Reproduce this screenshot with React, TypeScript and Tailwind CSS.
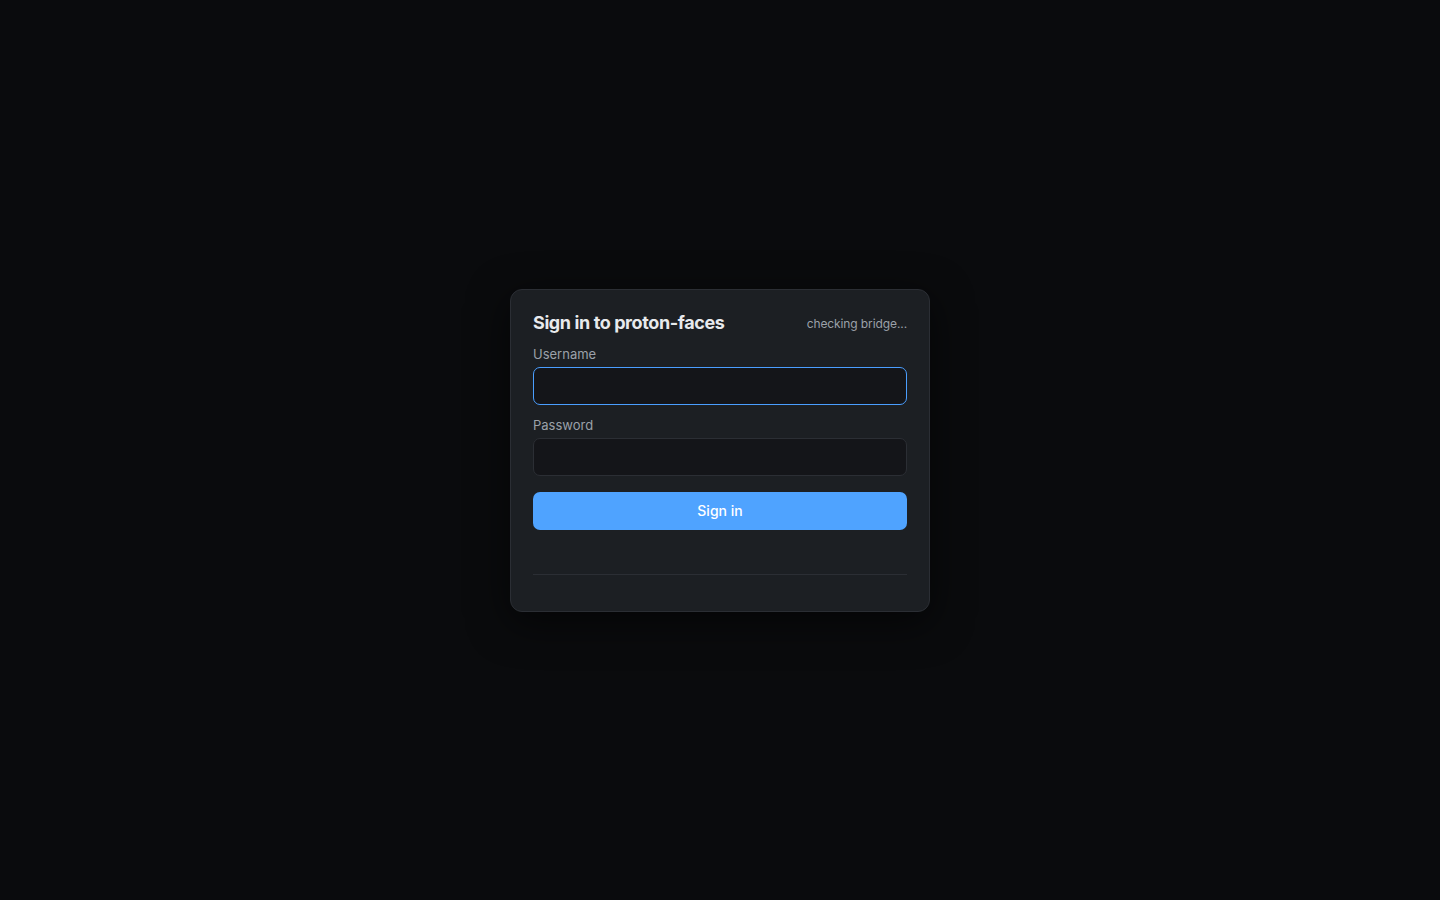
export default function App() {
  return (
    <div
      className="min-h-screen w-full flex items-center justify-center bg-[#0a0b0d]"
      style={{ fontFamily: "Inter, 'Noto Sans', sans-serif" }}
    >
      {/* Login card */}
      <div className="w-[420px] rounded-[12px] border border-[#2b2e34] bg-[#1c1f23] px-[22px] pt-[22px] pb-[36px] shadow-[0_10px_40px_rgba(0,0,0,0.6)]">
        <div className="flex items-center justify-between h-[22px]">
          <h1 className="text-[18px] font-bold leading-[22px] text-[#e8eaed] tracking-[-0.4px]">
            Sign in to proton-faces
          </h1>
          <span className="text-[12px] leading-[16px] text-[#9ba1a9] mt-[3px] tracking-[-0.1px]">checking bridge...</span>
        </div>

        <div className="mt-[12px] flex flex-col">
          <label className="text-[13px] leading-[16px] text-[#9ba1a9]">Username</label>
          <input
            className="mt-[5px] h-[38px] w-full rounded-[7px] border border-[#4a9eff] bg-[#141519] px-3 text-[14px] text-[#e8eaed] outline-none"
            type="text"
          />
          <label className="mt-[12px] text-[13px] leading-[16px] text-[#9ba1a9]">Password</label>
          <input
            className="mt-[5px] h-[38px] w-full rounded-[7px] border border-[#2b2e34] bg-[#141519] px-3 text-[14px] text-[#e8eaed] outline-none"
            type="password"
          />
          <button className="mt-[16px] h-[38px] w-full rounded-[7px] bg-[#4fa3ff] text-[14px] font-medium text-white">
            Sign in
          </button>
        </div>

        <div className="mt-[44px] border-t border-[#2b2e34]" />
      </div>
    </div>
  );
}
